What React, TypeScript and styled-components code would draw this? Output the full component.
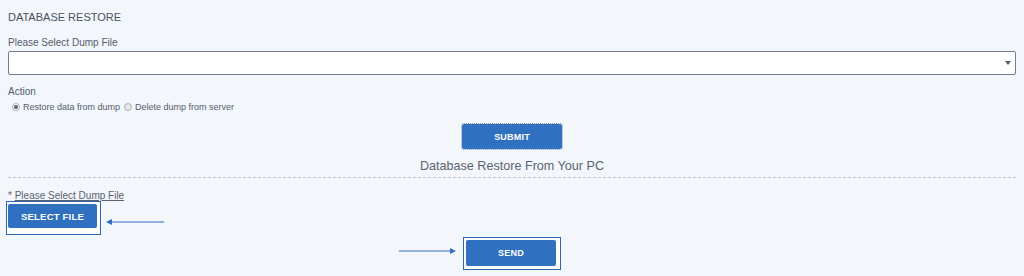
import React from 'react';
import styled, { createGlobalStyle } from 'styled-components';

const GlobalStyle = createGlobalStyle`
  html, body {
    margin: 0;
    padding: 0;
    background: #f3f6fb;
    font-family: "Liberation Sans", Arial, sans-serif;
  }
`;

const Page = styled.div`
  padding: 9px 8px 0 8px;
  color: #4f5666;
`;

const Title = styled.div`
  font-size: 11px;
  line-height: 16px;
  text-transform: uppercase;
  color: #4a5262;
`;

const Label = styled.div<{ $top: number }>`
  margin-top: ${(p) => p.$top}px;
  font-size: 10px;
  line-height: 16px;
  color: #555c6b;
`;

const SelectBox = styled.div`
  position: relative;
  height: 22px;
  background: #fff;
  border: 1px solid #6f7d99;
  border-radius: 2px;
`;

const Caret = styled.span`
  position: absolute;
  right: 4px;
  top: 9px;
  width: 0;
  height: 0;
  border-left: 3px solid transparent;
  border-right: 3px solid transparent;
  border-top: 4px solid #555c6b;
`;

const RadioRow = styled.div`
  display: flex;
  align-items: center;
  gap: 4px;
  padding-left: 4px;
  height: 14px;
  font-size: 9px;
  color: #555c6b;
`;

const RadioOption = styled.label`
  display: flex;
  align-items: center;
  gap: 3px;
`;

const RadioDot = styled.span<{ $checked?: boolean }>`
  width: 6px;
  height: 6px;
  border-radius: 50%;
  border: 1px solid #a9b0bb;
  background: ${(p) => (p.$checked ? 'radial-gradient(circle, #6a7180 45%, #fff 55%)' : '#e4e7ec')};
`;

const Center = styled.div<{ $top: number }>`
  display: flex;
  justify-content: center;
  margin-top: ${(p) => p.$top}px;
`;

const BlueButton = styled.button<{ $w: number; $h: number; $size?: number }>`
  width: ${(p) => p.$w}px;
  height: ${(p) => p.$h}px;
  padding: 0;
  border: none;
  border-radius: 2px;
  background: #2f70c0;
  color: #fff;
  font-family: "Liberation Sans", Arial, sans-serif;
  font-size: ${(p) => p.$size ?? 9}px;
  font-weight: bold;
  letter-spacing: 0.2px;
`;

const SubmitButton = styled(BlueButton)`
  outline: 1px dotted #8a99b3;
`;

const Subtitle = styled.div`
  margin-top: 9px;
  text-align: center;
  font-size: 12.6px;
  line-height: 16px;
  color: #596272;
`;

const Divider = styled.div`
  margin-top: 3px;
  border-top: 1px dashed #b9c7d8;
`;

const SmallLabel = styled.div`
  margin-top: 12px;
  font-size: 10px;
  line-height: 11px;
  color: #5b6271;

  span {
    text-decoration: underline;
  }
`;

const FocusFrame = styled.div<{ $pad: string }>`
  display: inline-flex;
  padding: ${(p) => p.$pad};
  border: 1px solid #2d66b1;
  background: #fdfdfe;
  box-shadow: inset 0 0 0 1px #fff;
`;

const SelectRow = styled.div`
  display: flex;
  align-items: flex-start;
  margin-left: -2px;
`;

const SendRow = styled.div`
  display: grid;
  grid-template-columns: 1fr auto 1fr;
  align-items: center;
  margin-top: 2px;
`;

const ArrowCell = styled.div`
  display: flex;
  justify-content: flex-end;
  padding-right: 7px;
`;

const ArrowLeft = () => (
  <svg width="58" height="8" viewBox="0 0 58 8" style={{ marginLeft: 5, marginTop: 17 }}>
    <line x1="4" y1="4" x2="58" y2="4" stroke="#2f6fbe" strokeWidth="1.2" />
    <polygon points="0,4 6,1 6,7" fill="#2f6fbe" />
  </svg>
);

const ArrowRight = () => (
  <svg width="57" height="8" viewBox="0 0 57 8" style={{ marginTop: -6 }}>
    <line x1="0" y1="4" x2="52" y2="4" stroke="#2f6fbe" strokeWidth="1.2" />
    <polygon points="57,4 51,1 51,7" fill="#2f6fbe" />
  </svg>
);

export default function App() {
  return (
    <Page>
      <GlobalStyle />
      <Title>Database Restore</Title>
      <Label $top={10}>Please Select Dump File</Label>
      <SelectBox>
        <Caret />
      </SelectBox>
      <Label $top={9}>Action</Label>
      <RadioRow>
        <RadioOption>
          <RadioDot $checked />
          Restore data from dump
        </RadioOption>
        <RadioOption>
          <RadioDot />
          Delete dump from server
        </RadioOption>
      </RadioRow>
      <Center $top={10}>
        <SubmitButton $w={100} $h={25}>SUBMIT</SubmitButton>
      </Center>
      <Subtitle>Database Restore From Your PC</Subtitle>
      <Divider />
      <SmallLabel>
        * <span>Please Select Dump File</span>
      </SmallLabel>
      <SelectRow>
        <FocusFrame $pad="2px 3px 6px 1px">
          <BlueButton $w={89} $h={24} $size={9.5}>SELECT FILE</BlueButton>
        </FocusFrame>
        <ArrowLeft />
      </SelectRow>
      <SendRow>
        <ArrowCell>
          <ArrowRight />
        </ArrowCell>
        <FocusFrame $pad="2px 4px 3px 2px">
          <BlueButton $w={90} $h={26}>SEND</BlueButton>
        </FocusFrame>
        <div />
      </SendRow>
    </Page>
  );
}
